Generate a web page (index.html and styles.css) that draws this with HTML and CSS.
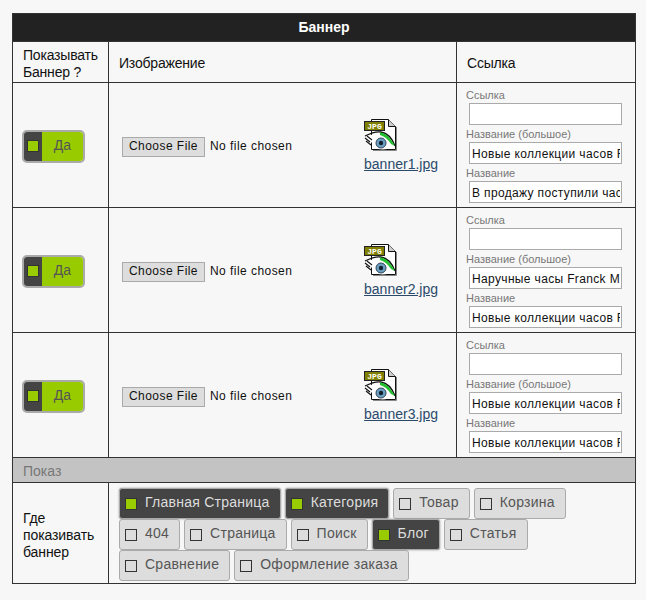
FILE: index.html
```html
<!DOCTYPE html>
<html lang="ru">
<head>
<meta charset="utf-8">
<title>Баннер</title>
<link rel="stylesheet" href="styles.css">
</head>
<body>
<table class="panel">
  <colgroup><col class="c1"><col class="c2"><col class="c3"></colgroup>
  <tr class="title"><th colspan="3">Баннер</th></tr>
  <tr class="heads">
    <td>Показывать Баннер ?</td>
    <td>Изображение</td>
    <td>Ссылка</td>
  </tr>
  <tr class="row">
    <td><div class="toggle"><span class="knob"><i></i></span><span class="lab">Да</span></div></td>
    <td><div class="imgcell">
      <div class="file"><button class="fbtn" type="button">Choose File</button><span>No file chosen</span></div>
      <div class="thumb">
        <svg width="33" height="33" viewBox="0 0 33 33">
          <path d="M7.5 1.5H24.5L31.5 8.5V31.5H7.5Z" fill="#fff" stroke="#111"/>
          <path d="M24.5 1.5V8.5H31.5" fill="#ccc" stroke="#111"/>
          <path d="M32.500 9V32.500H9" fill="none" stroke="#888"/>
          <rect x=".5" y="3.500" width="20" height="9" fill="#807f00" stroke="#222"/>
          <text x="10.500" y="10.800" class="jpgtxt" text-anchor="middle">JPG</text>
          <path d="M3 19C9 16 13 15 17 15C23 16 28 22 31 29C25 31 19 32 14 31C10 29 7 23 3 19Z" fill="#fff"/>
          <path d="M1 18C7 15 12 13 17 14C23 15 28 20 31 28" fill="none" stroke="#111" stroke-width="1.300"/>
          <path d="M16 14.500C22 15 26 19 31 28L27 26C24 21 20 18 16 17Z" fill="#22c030"/>
          <circle cx="17" cy="25" r="5" fill="#6a9fc2" stroke="#345"/>
          <circle cx="17" cy="25" r="2.200" fill="#12222e"/>
          <path d="M1 20L6 24M3 18L8 22M2 23L7 27" stroke="#111" stroke-width="1.100"/>
        </svg>
        <a href="#">banner1.jpg</a>
      </div>
    </div></td>
    <td class="fields">
      <label>Ссылка</label><input type="text" value="">
      <label>Название (большое)</label><input type="text" value="Новые коллекции часов Franck Muller">
      <label>Название</label><input type="text" value="В продажу поступили часы">
    </td>
  </tr>
  <tr class="row">
    <td><div class="toggle"><span class="knob"><i></i></span><span class="lab">Да</span></div></td>
    <td><div class="imgcell">
      <div class="file"><button class="fbtn" type="button">Choose File</button><span>No file chosen</span></div>
      <div class="thumb">
        <svg width="33" height="33" viewBox="0 0 33 33">
          <path d="M7.5 1.5H24.5L31.5 8.5V31.5H7.5Z" fill="#fff" stroke="#111"/>
          <path d="M24.5 1.5V8.5H31.5" fill="#ccc" stroke="#111"/>
          <path d="M32.500 9V32.500H9" fill="none" stroke="#888"/>
          <rect x=".5" y="3.500" width="20" height="9" fill="#807f00" stroke="#222"/>
          <text x="10.500" y="10.800" class="jpgtxt" text-anchor="middle">JPG</text>
          <path d="M3 19C9 16 13 15 17 15C23 16 28 22 31 29C25 31 19 32 14 31C10 29 7 23 3 19Z" fill="#fff"/>
          <path d="M1 18C7 15 12 13 17 14C23 15 28 20 31 28" fill="none" stroke="#111" stroke-width="1.300"/>
          <path d="M16 14.500C22 15 26 19 31 28L27 26C24 21 20 18 16 17Z" fill="#22c030"/>
          <circle cx="17" cy="25" r="5" fill="#6a9fc2" stroke="#345"/>
          <circle cx="17" cy="25" r="2.200" fill="#12222e"/>
          <path d="M1 20L6 24M3 18L8 22M2 23L7 27" stroke="#111" stroke-width="1.100"/>
        </svg>
        <a href="#">banner2.jpg</a>
      </div>
    </div></td>
    <td class="fields">
      <label>Ссылка</label><input type="text" value="">
      <label>Название (большое)</label><input type="text" value="Наручные часы Franck Muller">
      <label>Название</label><input type="text" value="Новые коллекции часов Franck Muller">
    </td>
  </tr>
  <tr class="row">
    <td><div class="toggle"><span class="knob"><i></i></span><span class="lab">Да</span></div></td>
    <td><div class="imgcell">
      <div class="file"><button class="fbtn" type="button">Choose File</button><span>No file chosen</span></div>
      <div class="thumb">
        <svg width="33" height="33" viewBox="0 0 33 33">
          <path d="M7.5 1.5H24.5L31.5 8.5V31.5H7.5Z" fill="#fff" stroke="#111"/>
          <path d="M24.5 1.5V8.5H31.5" fill="#ccc" stroke="#111"/>
          <path d="M32.500 9V32.500H9" fill="none" stroke="#888"/>
          <rect x=".5" y="3.500" width="20" height="9" fill="#807f00" stroke="#222"/>
          <text x="10.500" y="10.800" class="jpgtxt" text-anchor="middle">JPG</text>
          <path d="M3 19C9 16 13 15 17 15C23 16 28 22 31 29C25 31 19 32 14 31C10 29 7 23 3 19Z" fill="#fff"/>
          <path d="M1 18C7 15 12 13 17 14C23 15 28 20 31 28" fill="none" stroke="#111" stroke-width="1.300"/>
          <path d="M16 14.500C22 15 26 19 31 28L27 26C24 21 20 18 16 17Z" fill="#22c030"/>
          <circle cx="17" cy="25" r="5" fill="#6a9fc2" stroke="#345"/>
          <circle cx="17" cy="25" r="2.200" fill="#12222e"/>
          <path d="M1 20L6 24M3 18L8 22M2 23L7 27" stroke="#111" stroke-width="1.100"/>
        </svg>
        <a href="#">banner3.jpg</a>
      </div>
    </div></td>
    <td class="fields">
      <label>Ссылка</label><input type="text" value="">
      <label>Название (большое)</label><input type="text" value="Новые коллекции часов Franck Muller">
      <label>Название</label><input type="text" value="Новые коллекции часов Franck Muller">
    </td>
  </tr>
  <tr class="section"><td colspan="3">Показ</td></tr>
  <tr class="where">
    <td>Где показивать баннер</td>
    <td colspan="2"><div class="chips">
      <span class="chip on"><i></i>Главная Страница</span>
      <span class="chip on"><i></i>Категория</span>
      <span class="chip"><i></i>Товар</span>
      <span class="chip"><i></i>Корзина</span>
      <span class="chip"><i></i>404</span>
      <span class="chip"><i></i>Страница</span>
      <span class="chip"><i></i>Поиск</span>
      <span class="chip on"><i></i>Блог</span>
      <span class="chip"><i></i>Статья</span>
      <span class="chip"><i></i>Сравнение</span>
      <span class="chip"><i></i>Оформление заказа</span>
    </div></td>
  </tr>
</table>
</body>
</html>
```
FILE: styles.css
```css
html, body { margin: 0; padding: 0; background: #f7f7f7; }
body { padding: 13px 0 0 12px; font: 14px/17px "Liberation Sans", Arial, sans-serif; color: #111; }
.panel { border-collapse: collapse; table-layout: fixed; width: 623px; }
.c1 { width: 96px; }
.c2 { width: 348px; }
.c3 { width: 179px; }
.panel td, .panel th { box-sizing: border-box; border: 1px solid #333; padding: 0 10px; text-align: left; vertical-align: middle; }
.panel .title th { height: 28px; padding: 0; background: #222; color: #fff; text-align: center; font-size: 14px; font-weight: bold; }
.heads td { height: 41px; padding-top: 3px !important; letter-spacing: -.2px; }
.row td { height: 125px; }
.panel .row td:first-child { padding: 2px 0 0 9px; }
.toggle { display: flex; box-sizing: border-box; width: 63px; height: 33px; border: 2px solid #aaa; border-radius: 5px; overflow: hidden; }
.knob { width: 18px; background: #444; display: flex; align-items: center; justify-content: center; }
.knob i { width: 10px; height: 10px; background: #9c0; border: 1px solid #333; }
.lab { flex: 1; background: #9c0; color: #555; text-align: center; line-height: 27px; }
.imgcell { display: flex; align-items: center; justify-content: space-between; padding: 0 8px 0 3px; }
.file { display: flex; align-items: center; gap: 5px; font-size: 12px; letter-spacing: .45px; margin-top: 3px; }
.fbtn { height: 20px; width: 83px; padding: 0; border: 1px solid #aaa; background: #ddd; color: #111; font: inherit; letter-spacing: .45px; }
.thumb { display: flex; flex-direction: column; align-items: flex-start; margin-top: 1px; }
.thumb a { color: #2b4a6b; font-size: 14px; line-height: 17px; margin-top: 5px; }
.thumb svg { display: block; }
.jpgtxt { font: bold 8px "Liberation Mono", monospace; fill: #fff; }
.panel td.fields { padding: 6px 0 0 9px; vertical-align: top; }
.fields label { display: block; font-size: 11px; line-height: 13px; color: #777; }
.fields input { display: block; box-sizing: border-box; width: 153px; height: 22px; margin: 1px 0 3px 3px; padding: 1px 1px 0 2px; border: 1px solid #aaa; background: #fff; font: 12px "Liberation Sans", Arial, sans-serif; letter-spacing: .35px; color: #111; outline: 0; }
.section td { height: 25px; padding-top: 2px !important; background: #c3c3c3; color: #777; }
.where td { height: 101px; padding-top: 4px !important; letter-spacing: -.1px; }
.panel .where td:last-child { padding: 5px 10px 2px 10px !important; vertical-align: top; }
.chips { display: flex; flex-wrap: wrap; gap: 0 4px; }
.chip { display: flex; align-items: center; height: 31px; box-sizing: border-box; padding: 0 10px 2px 5px; border: 1px solid #aaa; border-radius: 3px; background: #ddd; color: #555; letter-spacing: .25px; }
.chip i { width: 10px; height: 10px; margin: 3px 8px 0 0; border: 1px solid #333; flex: none; }
.chip.on { background: #444; color: #ddd; box-shadow: 0 0 2px #888; }
.chip.on i { background: #9c0; }
```
